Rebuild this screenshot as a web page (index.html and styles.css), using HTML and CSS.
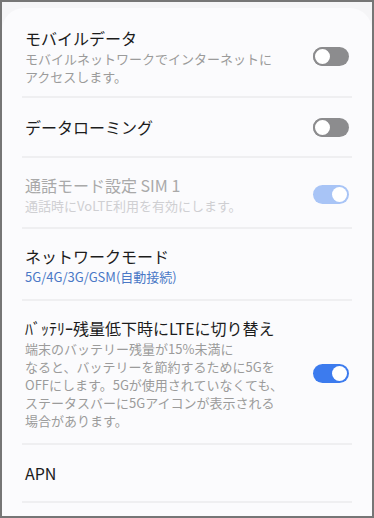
FILE: index.html
```html
<!DOCTYPE html>
<html lang="ja">
<head>
<meta charset="utf-8">
<link rel="stylesheet" href="styles.css">
</head>
<body>
<div class="frame">
  <div class="card">
    <div class="row first">
      <div class="text">
        <div class="title">モバイルデータ</div>
        <div class="sub">モバイルネットワークでインターネットに<br>アクセスします。</div>
      </div>
      <span class="toggle off"><span class="knob"></span></span>
    </div>
    <div class="row single">
      <div class="text">
        <div class="title">データローミング</div>
      </div>
      <span class="toggle off"><span class="knob"></span></span>
    </div>
    <div class="row tight">
      <div class="text">
        <div class="title disabled">通話モード設定 SIM 1</div>
        <div class="sub disabled">通話時にVoLTE利用を有効にします。</div>
      </div>
      <span class="toggle on dim"><span class="knob"></span></span>
    </div>
    <div class="row">
      <div class="text">
        <div class="title">ネットワークモード</div>
        <div class="sub blue">5G/4G/3G/GSM(自動接続)</div>
      </div>
    </div>
    <div class="row">
      <div class="text">
        <div class="title">ﾊﾞｯﾃﾘｰ残量低下時にLTEに切り替え</div>
        <div class="sub">端末のバッテリー残量が15%未満に<br>なると、バッテリーを節約するために5Gを<br>OFFにします。5Gが使用されていなくても、<br>ステータスバーに5Gアイコンが表示される<br>場合があります。</div>
      </div>
      <span class="toggle on"><span class="knob"></span></span>
    </div>
    <div class="row single last">
      <div class="text">
        <div class="title">APN</div>
      </div>
    </div>
  </div>
</div>
</body>
</html>
```

FILE: styles.css
```css
html, body {
  margin: 0;
  padding: 0;
  background: #ffffff;
}
body {
  font-family: "Noto Sans CJK JP", "Noto Sans", sans-serif;
}
.frame {
  width: 374px;
  height: 518px;
  box-sizing: border-box;
  border: 2px solid #767676;
  background: #f5f5f7;
  overflow: hidden;
  padding-top: 6px;
}
.card {
  background: #fbfbfd;
  border-radius: 22px 22px 0 0;
  height: 100%;
  padding: 3px 20px 0 20px;
  box-sizing: border-box;
}
.row {
  display: flex;
  align-items: center;
  padding: 15px 0 13px 0;
  border-bottom: 2px solid #efeff1;
}
.row.first {
  padding-bottom: 10px;
}
.row.tight {
  padding-bottom: 12px;
}
.row.single {
  padding: 17px 0 17px 0;
}
.row.single.last {
  padding: 16px 0 16px 0;
}
.text {
  flex: 1;
  padding-left: 3px;
  min-width: 0;
}
.title {
  font-size: 16px;
  line-height: 24px;
  font-weight: 400;
  color: #1c1c1c;
  white-space: nowrap;
}
.sub {
  font-size: 13px;
  line-height: 18px;
  color: #9b9b9b;
  white-space: nowrap;
}
.title.disabled {
  color: #a9a9a9;
}
.sub.disabled {
  color: #cfcfd2;
}
.sub.blue {
  color: #4a78c6;
}
.toggle {
  position: relative;
  flex: none;
  width: 36px;
  height: 19px;
  border-radius: 10px;
  margin-right: 3px;
  box-sizing: border-box;
}
.toggle.off {
  background: #8c8c8e;
}
.toggle.on {
  background: #3c7bee;
}
.toggle.on.dim {
  background: #a8c4f6;
}
.knob {
  position: absolute;
  border-radius: 50%;
  background: #ffffff;
  box-sizing: border-box;
}
.toggle.off .knob {
  border: 2px solid #8c8c8e;
  top: 0;
  left: 0;
  width: 19px;
  height: 19px;
}
.toggle.on .knob {
  right: 2px;
  top: 2px;
  width: 15px;
  height: 15px;
}
```
